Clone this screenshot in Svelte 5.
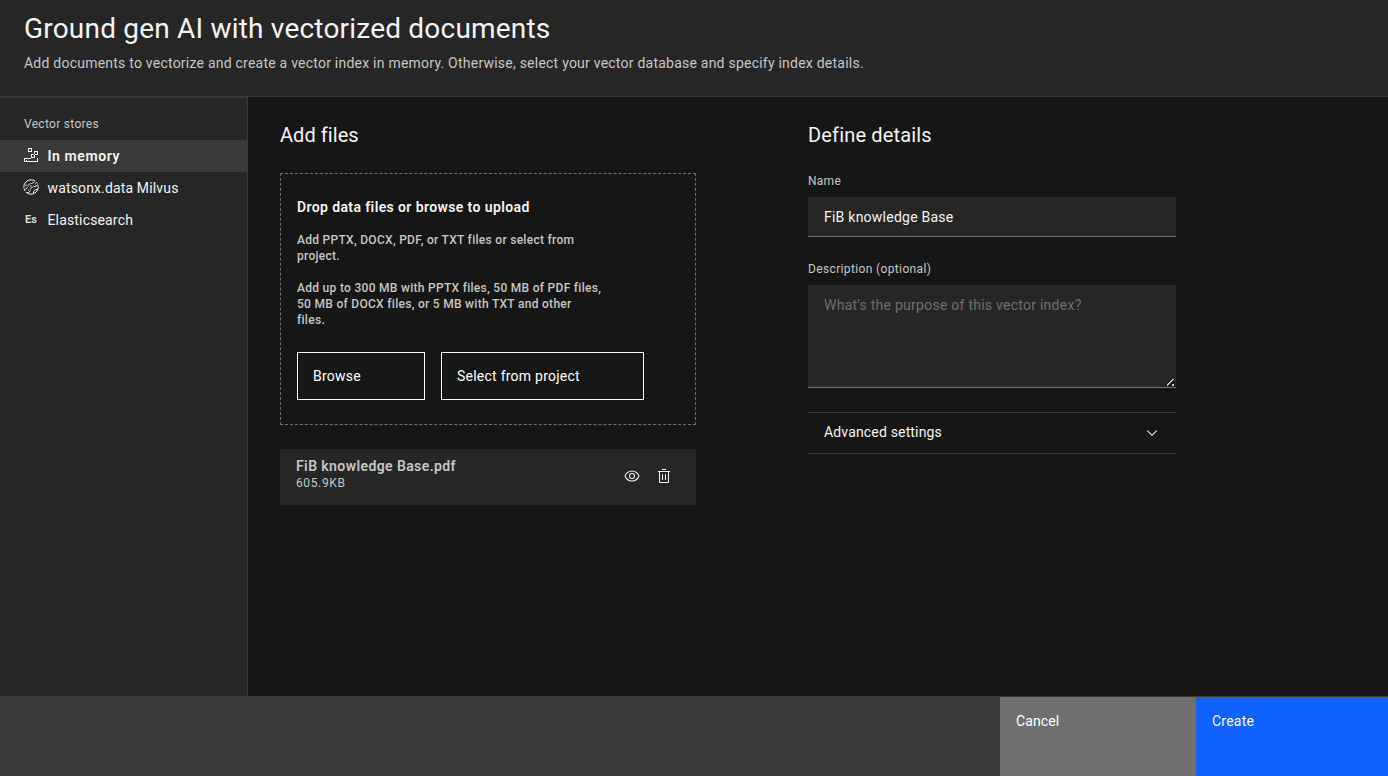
<script>
  let name = $state('FiB knowledge Base');
  let description = $state('');
  let selected = $state('memory');
</script>

<div class="page">
  <header>
    <h1>Ground gen AI with vectorized documents</h1>
    <p>Add documents to vectorize and create a vector index in memory. Otherwise, select your vector database and specify index details.</p>
  </header>

  <div class="body">
    <nav>
      <h2>Vector stores</h2>
      <button class="store" class:active={selected === 'memory'} onclick={() => (selected = 'memory')}>
        <svg class="crisp" width="16" height="16" viewBox="0 0 16 16" fill="currentColor">
          <path fill-rule="evenodd" d="M5 1h4v4H5zM6 2v2h2V2zM11 4h4v4h-4zM12 5v2h2V5zM8 7h4v4H8zM9 8v2h2V8z" />
          <path d="M1 11h7v1H2v2h12v-3h1v4H1zM3 12.500h1v1H3z" />
        </svg>
        <span class="memory">In memory</span>
      </button>
      <button class="store" class:active={selected === 'milvus'} onclick={() => (selected = 'milvus')}>
        <svg width="16" height="16" viewBox="0 0 16 16" fill="none" stroke="currentColor" stroke-width="1">
          <circle cx="8" cy="8" r="7.200" stroke-dasharray="17 1.200 2 1" />
          <path d="M1.300 10.200C4 10.300 4.300 8.600 4.600 7.200S6.500 4.700 8 4.600s3-.9 3.600-2.800" stroke-dasharray="4 .8" />
          <path d="M4.200 13.800c2.300-.1 2.800-1.400 3.200-3.300S9.300 7.700 11 7.600s2.600-.6 3.300-1.800" stroke-dasharray="4 .8" />
          <path d="M10.500 14.500c-.4-2.300.8-4 4-4.200M2.200 6.200h1.500M7 7h1.400M5 11.300h.9M12.200 4.800h.9" />
        </svg>
        <span class="milvus">watsonx.data Milvus</span>
      </button>
      <button class="store" class:active={selected === 'elastic'} onclick={() => (selected = 'elastic')}>
        <svg width="16" height="16" viewBox="0 0 16 16"><text x="2" y="12">Es</text></svg>
        <span class="elastic">Elasticsearch</span>
      </button>
    </nav>

    <main>
      <section class="files">
        <h3 class="add">Add files</h3>
        <div class="drop">
          <h4>Drop data files or browse to upload</h4>
          <p>Add PPTX, DOCX, PDF, or TXT files or select from<br />project.</p>
          <p>Add up to 300 MB with PPTX files, 50 MB of PDF files,<br />50 MB of DOCX files, or 5 MB with TXT and other<br />files.</p>
          <div class="actions">
            <button class="browse">Browse</button>
            <button class="project">Select from project</button>
          </div>
        </div>
        <div class="file">
          <div class="meta">
            <strong>FiB knowledge Base.pdf</strong>
            <span>605.9KB</span>
          </div>
          <button class="icon" aria-label="Preview">
            <svg width="16" height="16" viewBox="0 0 32 32" fill="currentColor">
              <path d="M30.94,15.66A16.69,16.69,0,0,0,16,5,16.69,16.69,0,0,0,1.06,15.66a1,1,0,0,0,0,.68A16.69,16.69,0,0,0,16,27,16.69,16.69,0,0,0,30.94,16.34,1,1,0,0,0,30.94,15.66ZM16,25c-5.3,0-10.9-3.93-12.93-9C5.1,10.93,10.7,7,16,7s10.9,3.93,12.93,9C26.9,21.07,21.3,25,16,25Z" />
              <path d="M16,10a6,6,0,1,0,6,6A6,6,0,0,0,16,10Zm0,10a4,4,0,1,1,4-4A4,4,0,0,1,16,20Z" />
            </svg>
          </button>
          <button class="icon" aria-label="Delete">
            <svg width="16" height="16" viewBox="0 0 32 32" fill="currentColor">
              <path d="M12 12H14V24H12zM18 12H20V24H18zM4 6V8H6V28a2 2 0 0 0 2 2H24a2 2 0 0 0 2-2V8h2V6zM8 28V8H24V28zM12 2H20V4H12z" />
            </svg>
          </button>
        </div>
      </section>

      <section class="details">
        <h3 class="define">Define details</h3>
        <label class="name-label" for="name">Name</label>
        <input id="name" type="text" bind:value={name} />
        <label class="desc-label" for="description">Description (optional)</label>
        <div class="area">
          <textarea id="description" placeholder="What's the purpose of this vector index?" bind:value={description}></textarea>
          <svg class="grip crisp" width="10" height="10" viewBox="0 0 10 10" fill="none">
            <path d="M0 10L10 0V10z" fill="#161616" />
            <path d="M3 9.500L9.500 3" stroke="#c6c6c6" stroke-width="2" />
            <path d="M8 8h2v2H8z" fill="#c6c6c6" />
          </svg>
        </div>
        <button class="advanced">
          <span>Advanced settings</span>
          <svg width="16" height="16" viewBox="0 0 16 16" fill="currentColor"><path d="M8 11L3 6 3.700 5.300 8 9.600 12.300 5.300 13 6z" /></svg>
        </button>
      </section>
    </main>
  </div>

  <footer>
    <button class="cancel">Cancel</button>
    <button class="create">Create</button>
  </footer>
</div>

<style>
  :global(body) { margin: 0; background: #161616; }
  .page {
    box-sizing: border-box;
    width: 100%;
    height: 100vh;
    display: flex;
    flex-direction: column;
    overflow: hidden;
    background: #161616;
    color: #f4f4f4;
    color-scheme: dark;
    font: 400 14px/18px Roboto, "Liberation Sans", sans-serif;
    letter-spacing: 0.24px;
  }
  .page * { box-sizing: border-box; }
  h1, h2, h3, h4, p { margin: 0; font-weight: 400; }
  button, input, textarea {
    margin: 0;
    border: 0;
    border-radius: 0;
    outline: none;
    background: none;
    color: inherit;
    font: inherit;
    letter-spacing: inherit;
    text-align: left;
  }
  svg { display: block; flex: none; }

  header { flex: none; height: 97px; padding: 11px 24px 0; background: #262626; border-bottom: 1px solid #393939; }
  h1 { font-size: 28px; line-height: 36px; letter-spacing: 0.2px; }
  header p { margin-top: 7px; color: #c6c6c6; letter-spacing: 0.23px; white-space: nowrap; }

  .body { flex: 1; display: flex; min-height: 0; }
  nav { width: 248px; padding-top: 18px; background: #262626; border-top: 1px solid #393939; border-right: 1px solid #393939; }
  nav h2 { padding: 0 24px 8px; font-size: 12px; line-height: 16px; letter-spacing: 0.3px; color: #c6c6c6; }
  .store { display: flex; align-items: center; gap: 8.5px; width: 100%; height: 32px; padding: 0 23px; }
  .store.active { background: #393939; font-weight: 600; }
  .store svg { margin-top: -2px; }
  .store text { font: 600 11px Roboto, sans-serif; letter-spacing: 0; fill: #e0e0e0; }
  .crisp { shape-rendering: crispEdges; }
  .memory { letter-spacing: 0.587px; }
  .milvus { letter-spacing: 0.146px; }
  .elastic { letter-spacing: 0.159px; }

  main { flex: 1; display: flex; gap: 112px; padding: 24px 32px 0; }
  .files { width: 416px; }
  .details { width: 368px; display: flex; flex-direction: column; }
  h3 { font-size: 20px; line-height: 28px; }
  .add { letter-spacing: 0.062px; }
  .define { letter-spacing: 0.158px; }

  .drop { height: 252px; margin-top: 24px; padding: 24px 16px; border: 1px dashed #6f6f6f; }
  h4 { font-size: 14px; font-weight: 600; letter-spacing: 0.39px; }
  .drop p { margin-top: 16px; font-size: 12px; font-weight: 500; line-height: 16px; letter-spacing: 0.29px; color: #c6c6c6; }
  .actions { display: flex; gap: 16px; margin-top: 24px; }
  .actions button { height: 48px; padding: 0 15px; border: 1px solid #fff; color: #fff; }
  .browse { width: 128px; }
  .project { width: 203px; }

  .file { display: flex; align-items: flex-start; height: 56px; margin-top: 24px; padding: 8px 16px; background: #262626; }
  .meta { flex: 1; display: flex; flex-direction: column; color: #c6c6c6; }
  .meta strong { font-weight: 600; letter-spacing: 0.407px; }
  .meta span { font-size: 12px; line-height: 16px; letter-spacing: 0.622px; }
  .icon { display: grid; place-items: center; width: 32px; height: 38px; padding: 0; }

  label { font-size: 12px; line-height: 16px; color: #c6c6c6; }
  .name-label { margin-top: 24px; letter-spacing: 0.256px; }
  .desc-label { margin-top: 24px; letter-spacing: 0.36px; }
  input { height: 40px; margin-top: 8px; padding: 0 16px; background: #262626; border-bottom: 1px solid #6f6f6f; }
  .area { position: relative; margin-top: 8px; }
  textarea { display: block; width: 100%; height: 103px; padding: 11px 16px; background: #262626; border-bottom: 1px solid #6f6f6f; resize: none; }
  textarea::placeholder { color: #6f6f6f; opacity: 1; letter-spacing: 0.257px; }
  .grip { position: absolute; right: 2px; bottom: 2px; pointer-events: none; }
  .advanced {
    display: flex;
    justify-content: space-between;
    height: 42px;
    margin-top: 24px;
    padding: 10px 16px;
    border-top: 1px solid #393939;
    border-bottom: 1px solid #393939;
    letter-spacing: 0.164px;
  }
  .advanced svg { margin-top: 2px; }

  footer { flex: none; display: flex; justify-content: flex-end; height: 80px; background: #393939; border-top: 1px solid #393939; }
  footer button { display: flex; align-items: flex-start; padding: 15px 16px; color: #fff; }
  .cancel { width: 196px; background: #6f6f6f; letter-spacing: 0.1px; }
  .create { width: 192px; background: #0f62fe; letter-spacing: 0.24px; }
</style>
